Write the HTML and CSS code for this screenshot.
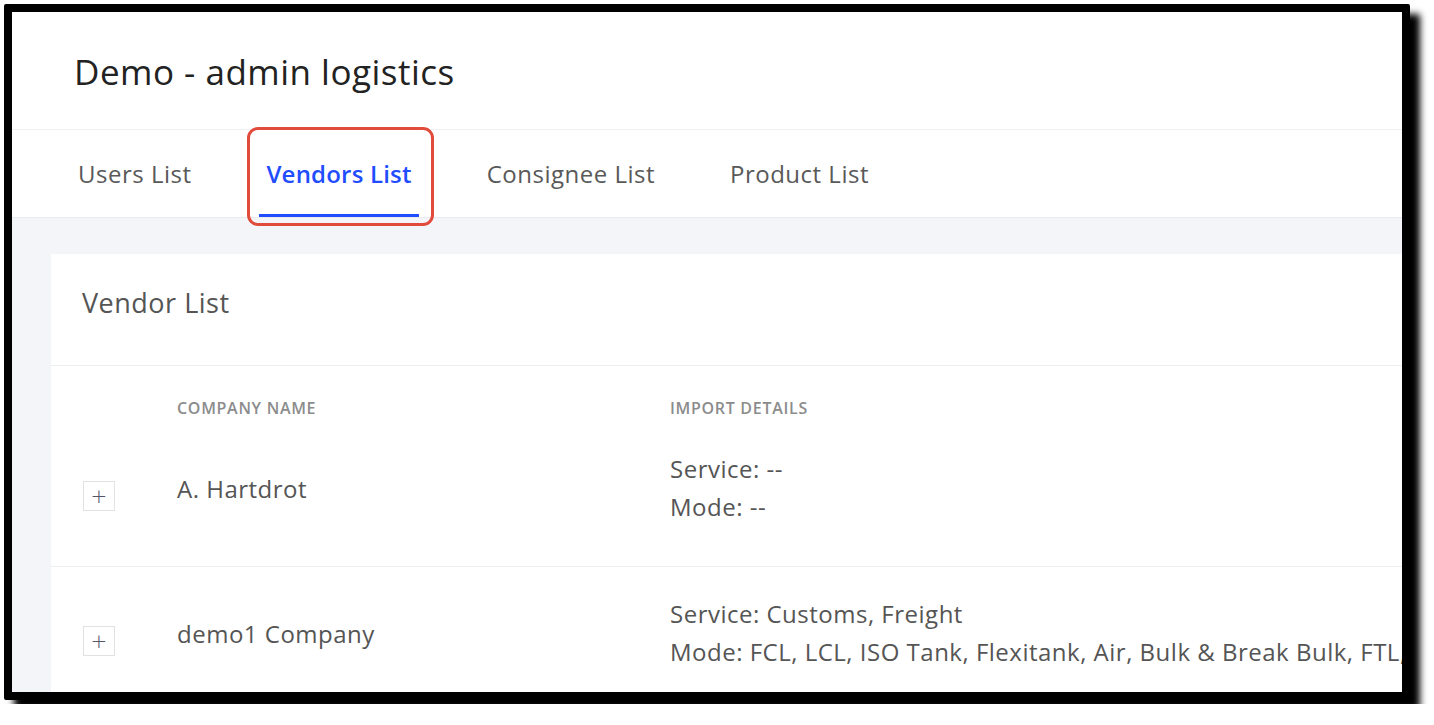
FILE: index.html
```html
<!DOCTYPE html>
<html lang="en">
<head>
    <meta charset="UTF-8">
    <meta name="viewport" content="width=device-width, initial-scale=1.0">
    <title>Demo - admin logistics</title>
    <link rel="stylesheet" href="styles.css">
</head>
<body>
    <div class="shot-frame">
        <div class="page-header">
            <h1>Demo - admin logistics</h1>
        </div>

        <nav class="tabs">
            <a class="tab">Users List</a>
            <a class="tab active">Vendors List</a>
            <a class="tab">Consignee List</a>
            <a class="tab">Product List</a>
        </nav>

        <div class="content">
            <div class="card">
                <div class="card-title">Vendor List</div>

                <div class="table-head">
                    <span></span>
                    <span>Company Name</span>
                    <span>Import Details</span>
                </div>

                <div class="table-row">
                    <div class="expand-cell"><button class="expand-btn">+</button></div>
                    <div class="company">A. Hartdrot</div>
                    <div class="details">
                        <div>Service: --</div>
                        <div>Mode: --</div>
                    </div>
                </div>

                <div class="table-row">
                    <div class="expand-cell"><button class="expand-btn">+</button></div>
                    <div class="company">demo1 Company</div>
                    <div class="details">
                        <div>Service: Customs, Freight</div>
                        <div>Mode: FCL, LCL, ISO Tank, Flexitank, Air, Bulk &amp; Break Bulk, FTL, LTL</div>
                    </div>
                </div>
            </div>
        </div>
    </div>
</body>
</html>
```

FILE: styles.css
```css
body {
    margin: 0;
    background-color: #ffffff;
    font-family: "Open Sans", "Liberation Sans", sans-serif;
    color: #555;
}
.shot-frame {
    margin: 4px;
    width: 1390px;
    height: 680px;
    border: 8px solid #000;
    box-shadow: 10px 10px 7px #000;
    border-radius: 2px;
    overflow: hidden;
    background-color: #fff;
    display: flex;
    flex-direction: column;
}
.page-header {
    flex-shrink: 0;
    height: 117px;
    border-bottom: 1px solid #eef0f4;
    display: flex;
    align-items: center;
    padding-left: 62px;
}
.page-header h1 {
    margin: 0;
    font-size: 35px;
    font-weight: 400;
    letter-spacing: 0.5px;
    color: #222;
    padding-top: 2px;
}
.tabs {
    flex-shrink: 0;
    height: 87px;
    border-bottom: 1px solid #e9ebf0;
    display: flex;
    gap: 61px;
    padding-left: 59px;
}
.tab {
    position: relative;
    display: flex;
    align-items: center;
    padding: 0 7px;
    font-size: 24px;
    letter-spacing: 0.5px;
    color: #595959;
    cursor: pointer;
}
.tab.active {
    color: #1f4dff;
    font-weight: 600;
    letter-spacing: 0.2px;
    border-bottom: 3px solid #1f4dff;
    padding-top: 3px;
}
.tab.active::after {
    content: "";
    position: absolute;
    left: -12px;
    right: -15px;
    top: -3px;
    bottom: -12px;
    border: 3px solid #e04b3b;
    border-radius: 11px;
}
.content {
    flex: 1;
    min-height: 0;
    background-color: #f4f5f9;
    padding: 36px 0 0 39px;
}
.card {
    background-color: #fff;
    height: 100%;
}
.card-title {
    box-sizing: border-box;
    height: 112px;
    border-bottom: 1px solid #eceef2;
    display: flex;
    align-items: center;
    padding: 0 0 14px 31px;
    font-size: 27px;
    letter-spacing: 0.5px;
    color: #555;
}
.table-head,
.table-row {
    display: grid;
    grid-template-columns: 126px 493px 1fr;
}
.table-head {
    padding: 32px 0 4px;
    line-height: 20px;
    font-size: 16px;
    font-weight: 600;
    letter-spacing: 0.7px;
    text-transform: uppercase;
    color: #8c8c8c;
}
.table-row {
    padding: 28px 0 40px;
    border-bottom: 1px solid #ebedf1;
    align-items: center;
    font-size: 24px;
    letter-spacing: 0.5px;
}
.details {
    line-height: 38px;
    white-space: nowrap;
}
.expand-cell {
    padding-left: 32px;
    margin-top: 12px;
}
.expand-btn {
    width: 32px;
    height: 30px;
    padding: 0;
    border: 1px solid #e2e2e2;
    background-color: #fff;
    color: #556;
    font-size: 20px;
    line-height: 1;
    font-family: "DejaVu Sans", sans-serif;
    font-weight: 300;
}
```
